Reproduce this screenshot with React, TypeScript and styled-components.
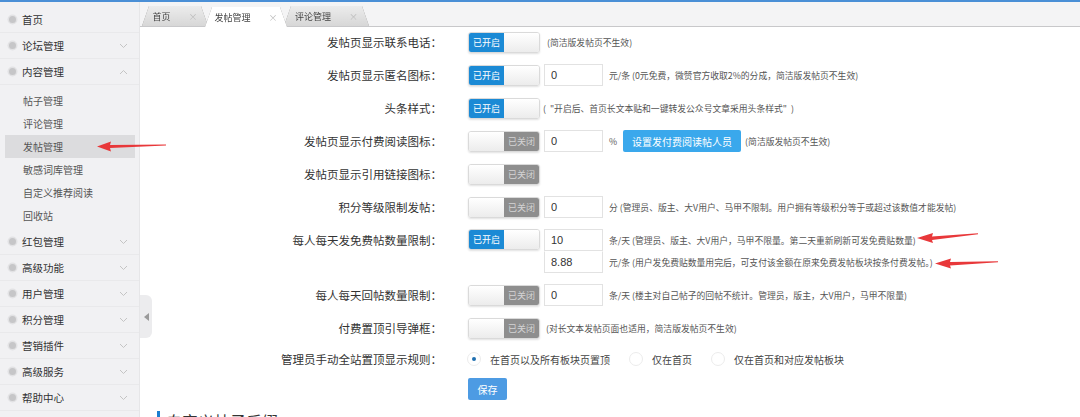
import styled, { createGlobalStyle } from "styled-components";

const GlobalStyle = createGlobalStyle`
  html, body {
    margin: 0;
    padding: 0;
    background: #fff;
  }
  body {
    font-family: "Noto Sans CJK SC", "Noto Sans", sans-serif;
    color: #333;
  }
`;

type NavItem = { title: string; open?: boolean; children?: string[] };

const navItems: NavItem[] = [
  { title: '首页' },
  { title: '论坛管理', children: [] },
  { title: '内容管理', open: true, children: ['帖子管理', '评论管理', '发帖管理', '敏感词库管理', '自定义推荐阅读', '回收站'] },
  { title: '红包管理', children: [] },
  { title: '高级功能', children: [] },
  { title: '用户管理', children: [] },
  { title: '积分管理', children: [] },
  { title: '营销插件', children: [] },
  { title: '高级服务', children: [] },
  { title: '帮助中心', children: [] },
];

const tabs = [
  { title: '首页', width: 66 },
  { title: '发帖管理', width: 82, active: true },
  { title: '评论管理', width: 85 },
];

const Chevron = ({ up }: { up?: boolean }) => (
  <svg width="9" height="6" viewBox="0 0 9 6">
    <polyline
      points={up ? '1,5 4.5,1.5 8,5' : '1,1 4.5,4.5 8,1'}
      fill="none"
      stroke="#c4c4c4"
      strokeWidth="1"
    />
  </svg>
);

const Toggle = ({ on }: { on?: boolean }) =>
  on ? (
    <Switch>
      <SwitchPart $kind="on">已开启</SwitchPart>
      <SwitchPart />
    </Switch>
  ) : (
    <Switch>
      <SwitchPart />
      <SwitchPart $kind="off">已关闭</SwitchPart>
    </Switch>
  );

const Arrows = () => (
  <ArrowLayer width="1080" height="417" viewBox="0 0 1080 417">
    {/* sidebar arrow */}
    <polygon points="97,146.5 111,141.5 110,145 166,144.6 166,145.6 110,148 111,151.5" fill="#e8383a" />
    {/* free posts */}
    <polygon points="917,238 933,233 932,236.5 978,233.3 978,234.3 932,240 933,243" fill="#e8383a" />
    {/* paid posts */}
    <polygon points="935,263.5 951,258.5 950,262 998,261.3 998,262.3 950,265.5 951,268.5" fill="#e8383a" />
  </ArrowLayer>
);

const App = () => {
  return (
    <Page>
      <GlobalStyle />
      <TopLine />
      <Body>
        <Sidebar>
          {navItems.map((item) => (
            <div key={item.title}>
              <NavRow>
                <Dot />
                <NavTitle>{item.title}</NavTitle>
                {item.children && <Chevron up={item.open} />}
              </NavRow>
              {item.open && (
                <SubList>
                  {item.children!.map((sub) => (
                    <SubItem key={sub} $active={sub === '发帖管理'}>{sub}</SubItem>
                  ))}
                </SubList>
              )}
            </div>
          ))}
        </Sidebar>
        <Main>
          <CollapseHandle>
            <svg width="5" height="8" viewBox="0 0 5 8">
              <polygon points="5,0 0,4 5,8" fill="#9a9a9a" />
            </svg>
          </CollapseHandle>
          <TabBar>
            {tabs.map((tab) => (
              <TabWrap key={tab.title} $width={tab.width} $active={tab.active}>
                <Tab $active={tab.active}>
                  <span>{tab.title}</span>
                  <TabClose>×</TabClose>
                </Tab>
              </TabWrap>
            ))}
          </TabBar>

          <Form>
            <Row>
              <Label>发帖页显示联系电话：</Label>
              <Controls>
                <Toggle on />
                <Note $gap={7}>(简洁版发帖页不生效)</Note>
              </Controls>
            </Row>
            <Row>
              <Label>发帖页显示匿名图标：</Label>
              <Controls>
                <Toggle on />
                <Input defaultValue="0" />
                <Note>元/条 (0元免费，微赞官方收取2%的分成，简洁版发帖页不生效)</Note>
              </Controls>
            </Row>
            <Row>
              <Label>头条样式：</Label>
              <Controls>
                <Toggle on />
                <Note $gap={3}>(&nbsp;&nbsp;"开启后、首页长文本贴和一键转发公众号文章采用头条样式"&nbsp;&nbsp;)</Note>
              </Controls>
            </Row>
            <Row>
              <Label>发帖页显示付费阅读图标：</Label>
              <Controls>
                <Toggle />
                <Input defaultValue="0" />
                <Note>%</Note>
                <BlueButton>设置发付费阅读帖人员</BlueButton>
                <Note $gap={4}>(简洁版发帖页不生效)</Note>
              </Controls>
            </Row>
            <Row>
              <Label>发帖页显示引用链接图标：</Label>
              <Controls>
                <Toggle />
              </Controls>
            </Row>
            <Row>
              <Label>积分等级限制发帖：</Label>
              <Controls>
                <Toggle />
                <Input defaultValue="0" />
                <Note>分 (管理员、版主、大V用户、马甲不限制。用户拥有等级积分等于或超过该数值才能发帖)</Note>
              </Controls>
            </Row>
            <Row>
              <Label>每人每天发免费帖数量限制：</Label>
              <Controls $top>
                <Toggle on />
                <Stack>
                  <Controls>
                    <Input defaultValue="10" />
                    <Note>条/天 (管理员、版主、大V用户，马甲不限量。第二天重新刷新可发免费贴数量)</Note>
                  </Controls>
                  <Controls>
                    <Input defaultValue="8.88" $joined />
                    <Note>元/条 (用户发免费贴数量用完后，可支付该金额在原来免费发帖板块按条付费发帖。)</Note>
                  </Controls>
                </Stack>
              </Controls>
            </Row>
            <Row>
              <Label>每人每天回帖数量限制：</Label>
              <Controls>
                <Toggle />
                <Input defaultValue="0" />
                <Note>条/天 (楼主对自己帖子的回帖不统计。管理员，版主，大V用户，马甲不限量)</Note>
              </Controls>
            </Row>
            <Row>
              <Label>付费置顶引导弹框：</Label>
              <Controls>
                <Toggle />
                <Note $gap={6}>(对长文本发帖页面也适用，简洁版发帖页不生效)</Note>
              </Controls>
            </Row>
            <Row $shift={-2}>
              <Label>管理员手动全站置顶显示规则：</Label>
              <Controls>
                <RadioOption>
                  <Radio $checked />
                  在首页以及所有板块页置顶
                </RadioOption>
                <RadioOption>
                  <Radio />
                  仅在首页
                </RadioOption>
                <RadioOption>
                  <Radio />
                  仅在首页和对应发帖板块
                </RadioOption>
              </Controls>
            </Row>
            <Row $shift={-3}>
              <span />
              <Controls>
                <SaveButton>保存</SaveButton>
              </Controls>
            </Row>
          </Form>

          <SectionTitle>自定义帖子后缀</SectionTitle>
        </Main>
      </Body>
      <Arrows />
    </Page>
  );
};

export default App;

const Page = styled.div`
  position: relative;
  width: 1080px;
  height: 417px;
  overflow: hidden;
  display: flex;
  flex-direction: column;
`

const TopLine = styled.div`
  height: 2px;
  background: #4a8fd6;
  flex-shrink: 0;
`

const Body = styled.div`
  flex: 1;
  display: flex;
  min-height: 0;
`

const Sidebar = styled.nav`
  width: 140px;
  flex-shrink: 0;
  background: #f1f1f3;
  border-right: 1px solid #e6e6e8;
  box-sizing: border-box;
  padding-top: 5px;
`

const NavRow = styled.div`
  height: 26px;
  display: flex;
  align-items: center;
  padding: 0 11px 0 9px;
  border-bottom: 1px solid #e9e9eb;
  box-sizing: border-box;
`

const Dot = styled.span`
  width: 7px;
  height: 7px;
  border-radius: 50%;
  background: #c6c6c8;
  box-shadow: 0 0 0 1.5px #e2e2e4;
  margin-right: 6px;
`

const NavTitle = styled.span`
  flex: 1;
  font-size: 10.5px;
  color: #333;
`

const SubList = styled.div`
  padding: 4px 0 2px;
`

const SubItem = styled.div<{ $active?: boolean }>`
  height: 23px;
  line-height: 23px;
  margin: 0 4px 0 5px;
  padding-left: 18px;
  font-size: 10px;
  color: #555;
  background: ${(p) => (p.$active ? '#dcdcde' : 'transparent')};
`

const Main = styled.main`
  position: relative;
  flex: 1;
  display: flex;
  flex-direction: column;
  background: #fff;
  min-height: 0;
`

const CollapseHandle = styled.div`
  position: absolute;
  left: 0;
  top: 293px;
  width: 12px;
  height: 43px;
  background: #ececee;
  border-radius: 0 6px 6px 0;
  display: flex;
  align-items: center;
  justify-content: center;
  z-index: 2;
`

const TabBar = styled.div`
  height: 25px;
  flex-shrink: 0;
  display: flex;
  align-items: flex-end;
  padding-left: 2px;
  background: #f4f4f5;
  border-bottom: 1px solid #c8c8ca;
  box-sizing: border-box;
`

const TabWrap = styled.div<{ $width: number; $active?: boolean }>`
  width: ${(p) => p.$width}px;
  height: 20px;
  margin-right: -3px;
  margin-bottom: ${(p) => (p.$active ? '-1px' : '0')};
  position: relative;
  z-index: ${(p) => (p.$active ? 2 : 1)};
  filter: drop-shadow(0 0 0.6px #8a8a8a);
`

const Tab = styled.div<{ $active?: boolean }>`
  height: 100%;
  display: flex;
  align-items: center;
  justify-content: center;
  gap: 18px;
  font-size: 9px;
  color: #444;
  clip-path: polygon(7px 0, calc(100% - 7px) 0, 100% 100%, 0 100%);
  border-radius: 3px 3px 0 0;
  background: ${(p) => (p.$active ? '#fff' : 'linear-gradient(#ececec, #d7d7d7)')};
`

const TabClose = styled.span`
  font-size: 9px;
  color: #bbb;
`

const Form = styled.div`
  display: flex;
  flex-direction: column;
  gap: 11px;
  padding-top: 4px;
  flex-shrink: 0;
`

const Row = styled.div<{ $shift?: number }>`
  display: grid;
  grid-template-columns: 302px 1fr;
  column-gap: 26px;
  align-items: start;
  margin-top: ${(p) => p.$shift ?? 0}px;
`

const Label = styled.div`
  text-align: right;
  font-size: 11.5px;
  line-height: 22px;
  color: #333;
  white-space: nowrap;
`

const Controls = styled.div<{ $top?: boolean }>`
  display: flex;
  align-items: ${(p) => (p.$top ? 'flex-start' : 'center')};
  height: ${(p) => (p.$top ? 'auto' : '22px')};
`

const Stack = styled.div`
  display: flex;
  flex-direction: column;
`

const Switch = styled.div`
  display: flex;
  width: 72px;
  height: 21px;
  flex-shrink: 0;
  border: 1px solid #dadada;
  border-radius: 3px;
  overflow: hidden;
  box-sizing: border-box;
  box-shadow: 0 1px 2px rgba(0, 0, 0, 0.12);
`

const SwitchPart = styled.span<{ $kind?: 'on' | 'off' }>`
  flex: 1;
  display: flex;
  align-items: center;
  justify-content: center;
  font-size: 9px;
  color: ${(p) => (p.$kind === 'on' ? '#fff' : '#d4d4d4')};
  background: ${(p) =>
    p.$kind === 'on' ? '#1b8ad5' : p.$kind === 'off' ? '#8e8e8e' : 'linear-gradient(#fff, #ececec)'};
`

const Input = styled.input<{ $joined?: boolean }>`
  width: 59px;
  height: 22px;
  box-sizing: border-box;
  margin-left: 4px;
  border: 1px solid #e2e2e2;
  border-top-color: ${(p) => (p.$joined ? 'transparent' : '#e2e2e2')};
  padding: 0 6px;
  font-family: "Liberation Sans", sans-serif;
  font-size: 11px;
  color: #333;
  outline: none;
`

const Note = styled.span<{ $gap?: number }>`
  margin-left: ${(p) => p.$gap ?? 6}px;
  font-size: 8.8px;
  color: #555;
  white-space: nowrap;
`

const BlueButton = styled.button`
  height: 22px;
  margin-left: 6px;
  padding: 0 9px;
  border: none;
  border-radius: 2px;
  background: #3aa8ec;
  color: #fff;
  font-family: inherit;
  font-size: 10px;
`

const RadioOption = styled.label`
  display: flex;
  align-items: center;
  gap: 9px;
  margin-right: 20px;
  font-size: 10px;
  color: #444;
`

const Radio = styled.span<{ $checked?: boolean }>`
  width: 14px;
  height: 14px;
  border-radius: 50%;
  border: 1px solid #ececec;
  box-sizing: border-box;
  display: flex;
  align-items: center;
  justify-content: center;
  margin-left: -1px;

  &::after {
    content: '';
    width: 4px;
    height: 4px;
    border-radius: 50%;
    background: ${(p) => (p.$checked ? '#1f6fb0' : 'transparent')};
  }
`

const SaveButton = styled.button`
  width: 39px;
  height: 22px;
  border: none;
  border-radius: 2px;
  background: #4d9be3;
  color: #fff;
  font-family: inherit;
  font-size: 10px;
`

const SectionTitle = styled.h3`
  flex-shrink: 0;
  margin: 11px 0 0 17px;
  padding-left: 6px;
  border-left: 3px solid #1b7fd0;
  font-size: 16px;
  font-weight: normal;
  line-height: 20px;
  color: #333;
`

const ArrowLayer = styled.svg`
  position: absolute;
  inset: 0;
  pointer-events: none;
  z-index: 5;
`
